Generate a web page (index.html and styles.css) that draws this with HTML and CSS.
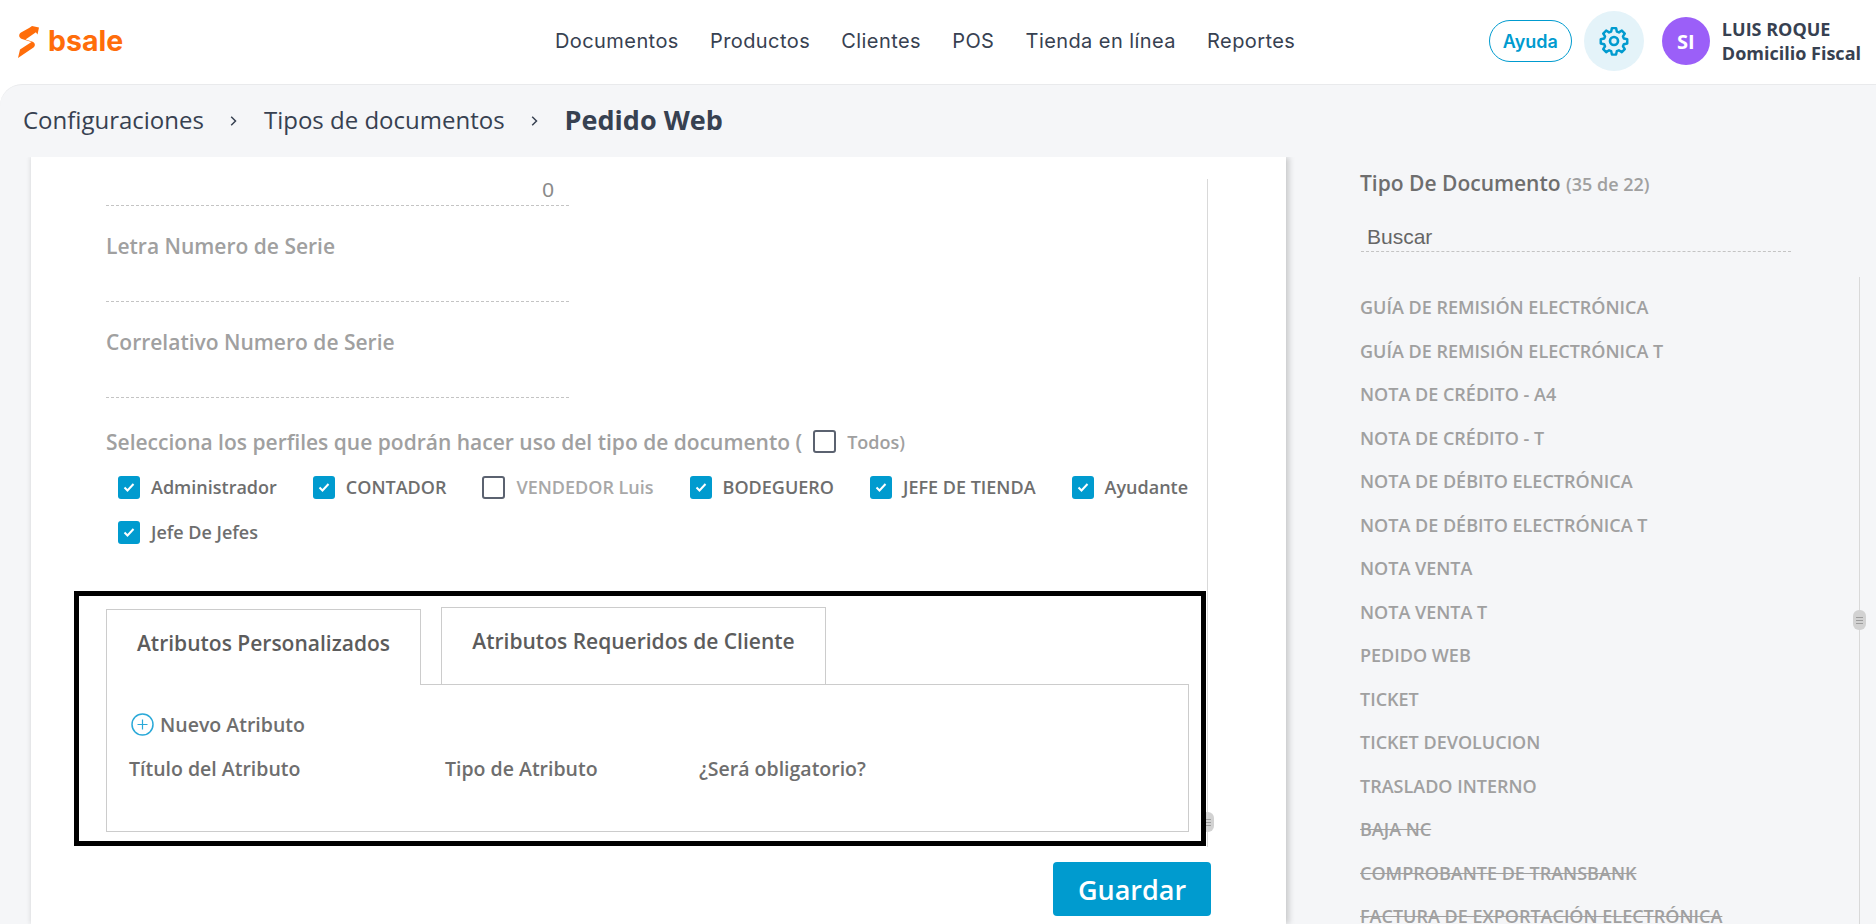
FILE: index.html
```html
<!DOCTYPE html>
<html lang="es">
<head>
<meta charset="utf-8">
<title>Pedido Web</title>
<link rel="stylesheet" href="styles.css">
</head>
<body>
<header class="topbar">
  <a class="logo">
    <svg class="logo-mark" viewBox="0 0 22 32" width="22" height="32"><path fill="#ff6d0a" d="M14 0l7 1.500-1.500 7-1.600-2.200L7.500 13.500 14 15.500c3 1 4 4 1.500 6L0 32l2-8.500 11.500-7.500-9.500-3C1 12 0 8.500 3 6.500L11.500 1.800z"/></svg>
    <span class="logo-text">bsale</span>
  </a>
  <nav class="nav">
    <a>Documentos</a><a>Productos</a><a>Clientes</a><a>POS</a><a>Tienda en línea</a><a>Reportes</a>
  </nav>
  <div class="top-actions">
    <a class="help">Ayuda</a>
    <span class="gear">
      <svg viewBox="0 0 24 24" width="32" height="32" fill="none" stroke="#009bcf" stroke-width="2" stroke-linejoin="round"><path d="M10.300 2.500h3.400l.6 2.800 1.700.7 2.400-1.500 2.400 2.400-1.500 2.400.7 1.700 2.800.6v3.400l-2.800.6-.7 1.700 1.500 2.400-2.400 2.400-2.400-1.500-1.700.7-.6 2.800h-3.400l-.6-2.800-1.700-.7-2.400 1.500-2.400-2.400 1.500-2.400-.7-1.700-2.800-.6v-3.400l2.800-.6.7-1.700-1.500-2.400 2.400-2.400 2.400 1.500 1.700-.7z" transform="translate(12 12) scale(.92) translate(-12 -13)"/><circle cx="12" cy="12" r="3"/></svg>
    </span>
    <span class="avatar">SI</span>
    <div class="user">
      <strong>LUIS ROQUE</strong>
      <strong>Domicilio Fiscal</strong>
    </div>
  </div>
</header>

<main class="page">
  <div class="crumbs">
    <a>Configuraciones</a>
    <svg class="sep" viewBox="0 0 7 10" width="7" height="10"><path d="M1.200 .8L5.500 5 1.200 9.200" fill="none" stroke="#374151" stroke-width="1.500"/></svg>
    <a>Tipos de documentos</a>
    <svg class="sep" viewBox="0 0 7 10" width="7" height="10"><path d="M1.200 .8L5.500 5 1.200 9.200" fill="none" stroke="#374151" stroke-width="1.500"/></svg>
    <b>Pedido Web</b>
  </div>

  <div class="columns">
    <section class="card">
      <div class="card-scroll">
        <div class="scroll-track"><span class="thumb"><i></i><i></i><i></i></span></div>
        <div class="field field-first"><div class="value">0</div></div>
        <div class="field">
          <label class="label">Letra Numero de Serie</label>
          <div class="value"></div>
        </div>
        <div class="field">
          <label class="label">Correlativo Numero de Serie</label>
          <div class="value"></div>
        </div>

        <div class="profiles-title">
          <span>Selecciona los perfiles que podrán hacer uso del tipo de documento (</span>
          <span class="box"></span>
          <span class="todos">Todos)</span>
        </div>
        <div class="profiles">
          <div class="check"><span class="box on"><svg viewBox="0 0 22 22" width="22" height="22"><path d="M6.500 11.500l3 3 6-6.500" fill="none" stroke="#fff" stroke-width="2"/></svg></span>Administrador</div>
          <div class="check"><span class="box on"><svg viewBox="0 0 22 22" width="22" height="22"><path d="M6.500 11.500l3 3 6-6.500" fill="none" stroke="#fff" stroke-width="2"/></svg></span>CONTADOR</div>
          <div class="check off"><span class="box"></span>VENDEDOR Luis</div>
          <div class="check"><span class="box on"><svg viewBox="0 0 22 22" width="22" height="22"><path d="M6.500 11.500l3 3 6-6.500" fill="none" stroke="#fff" stroke-width="2"/></svg></span>BODEGUERO</div>
          <div class="check"><span class="box on"><svg viewBox="0 0 22 22" width="22" height="22"><path d="M6.500 11.500l3 3 6-6.500" fill="none" stroke="#fff" stroke-width="2"/></svg></span>JEFE DE TIENDA</div>
          <div class="check"><span class="box on"><svg viewBox="0 0 22 22" width="22" height="22"><path d="M6.500 11.500l3 3 6-6.500" fill="none" stroke="#fff" stroke-width="2"/></svg></span>Ayudante</div>
          <div class="check"><span class="box on"><svg viewBox="0 0 22 22" width="22" height="22"><path d="M6.500 11.500l3 3 6-6.500" fill="none" stroke="#fff" stroke-width="2"/></svg></span>Jefe De Jefes</div>
        </div>

        <div class="highlight">
          <div class="tabs">
            <div class="tab active">Atributos Personalizados</div>
            <div class="tab">Atributos Requeridos de Cliente</div>
          </div>
          <div class="panel">
            <div class="new-attr">
              <svg viewBox="0 0 23 23" width="23" height="23" fill="none" stroke="#2ba9d8" stroke-width="1.500"><circle cx="11.500" cy="11.500" r="10.500"/><path d="M11.500 6.500v10M6.500 11.500h10" stroke-width="1.200"/></svg>
              <span>Nuevo Atributo</span>
            </div>
            <div class="attr-head">
              <span class="c1">Título del Atributo</span>
              <span class="c2">Tipo de Atributo</span>
              <span>¿Será obligatorio?</span>
            </div>
          </div>
        </div>
      </div>
      <div class="actions"><button class="save">Guardar</button></div>
    </section>

    <aside class="side">
      <h2 class="side-title">Tipo De Documento <small>(35 de 22)</small></h2>
      <div class="search">Buscar</div>
      <div class="side-list">
        <div class="scroll-track side-track"><span class="thumb"><i></i><i></i><i></i></span></div>
        <a>GUÍA DE REMISIÓN ELECTRÓNICA</a>
        <a>GUÍA DE REMISIÓN ELECTRÓNICA T</a>
        <a>NOTA DE CRÉDITO - A4</a>
        <a>NOTA DE CRÉDITO - T</a>
        <a>NOTA DE DÉBITO ELECTRÓNICA</a>
        <a>NOTA DE DÉBITO ELECTRÓNICA T</a>
        <a>NOTA VENTA</a>
        <a>NOTA VENTA T</a>
        <a>PEDIDO WEB</a>
        <a>TICKET</a>
        <a>TICKET DEVOLUCION</a>
        <a>TRASLADO INTERNO</a>
        <a class="gone">BAJA NC</a>
        <a class="gone">COMPROBANTE DE TRANSBANK</a>
        <a class="gone">FACTURA DE EXPORTACIÓN ELECTRÓNICA</a>
      </div>
    </aside>
  </div>
</main>
</body>
</html>
```
FILE: styles.css
```css
* { box-sizing: border-box; }
html, body { margin: 0; height: 924px; overflow: hidden; background: #fff; }
body { font-family: "Open Sans", sans-serif; color: #666; }

.topbar { height: 84px; display: flex; align-items: center; position: relative; }
.logo { display: flex; align-items: center; margin-left: 18px; gap: 8px; }
.logo-mark { display: block; }
.logo-text { font-family: "Inter", sans-serif; font-weight: 700; font-size: 28.500px; color: #ff6d0a; line-height: 32px; position: relative; top: -1px; }
.nav { position: absolute; left: 555px; top: 0; height: 84px; display: flex; align-items: center; gap: 31.200px; font-family: "Inter", sans-serif; font-size: 20px; color: #374151; padding-bottom: 2px; letter-spacing: .42px; }
.top-actions { margin-left: auto; display: flex; align-items: center; padding-right: 15px; }
.help { width: 83px; height: 42px; border: 1.500px solid #009bcf; border-radius: 21px; color: #009bcf; font-family: "Inter", sans-serif; font-weight: 600; font-size: 18px; display: flex; align-items: center; justify-content: center; margin-right: 12px; margin-bottom: 2px; }
.gear { width: 60px; height: 60px; border-radius: 50%; background: #e4f3f9; display: flex; align-items: center; justify-content: center; margin-right: 18px; margin-bottom: 2px; }
.avatar { width: 48px; height: 48px; border-radius: 50%; background: #9b5ff8; color: #fff; font-weight: 700; font-size: 20px; display: flex; align-items: center; justify-content: center; margin-right: 12px; margin-bottom: 2px; }
.user { display: flex; flex-direction: column; font-size: 18px; line-height: 24px; color: #374151; margin-bottom: 2px; }
.user strong { font-weight: 700; white-space: nowrap; }

.page { height: 840px; background: #f5f6f8; border-top: 1px solid #e9eaec; border-top-left-radius: 22px; overflow: hidden; }
.crumbs { height: 72px; padding: 0 0 3px 23px; display: flex; align-items: center; font-size: 24px; color: #374151; }
.crumbs .sep { margin: 2px 26.500px 0; flex: none; }
.crumbs b { font-weight: 700; font-size: 27px; }

.columns { display: flex; align-items: flex-start; }
.card { margin-left: 31px; width: 1255px; height: 767px; background: #fff; box-shadow: 3px 0 6px rgba(0,0,0,.18), -2px 0 4px rgba(0,0,0,.05); clip-path: inset(0 -12px 0 -12px); flex: none; }
.card-scroll { position: relative; padding: 21px 0 0 75px; height: 690px; }
.scroll-track { position: absolute; left: 1176px; top: 22px; bottom: 0; width: 1px; background: #d9d9d9; }
.thumb { position: absolute; left: -6px; top: 633px; width: 13px; height: 20px; border-radius: 6px; background: #d2d2d2; display: flex; flex-direction: column; align-items: center; justify-content: center; gap: 2px; }
.thumb i { display: block; width: 7px; height: 1px; background: #9d9d9d; }

.field { width: 463px; display: flex; flex-direction: column; justify-content: flex-end; }
.field-first { height: 28px; }
.field + .field { height: 96px; }
.label { font-size: 21px; font-weight: 600; color: #a0a0a0; line-height: 27px; margin-bottom: 41px; }
.value { height: 28px; border-bottom: 1px dashed #c4c4c4; text-align: right; font-size: 21px; line-height: 24px; color: #8a8a8a; padding-right: 15px; font-family: "Liberation Sans", sans-serif; }
.field .label + .value { height: 0; }

.profiles-title { display: flex; align-items: center; margin-top: 30px; height: 27px; font-size: 21px; font-weight: 600; color: #a0a0a0; white-space: nowrap; }
.todos { font-size: 18px; margin-left: 11px; }
.box { width: 23px; height: 23px; border: 2px solid #5b6270; border-radius: 3px; background: #fff; flex: none; margin-left: 11px; display: block; }
.box.on { border: 0; background: #009bcf; width: 22px; }
.profiles { display: flex; flex-wrap: wrap; column-gap: 36px; row-gap: 21px; margin: 20px 0 0 12px; width: 1090px; }
.check { display: flex; align-items: center; gap: 11px; font-size: 18px; font-weight: 600; color: #6e6e6e; height: 24px; white-space: nowrap; }
.check .box { margin-left: 0; }
.check.off { color: #a8a8a8; }

.highlight { position: absolute; left: 43px; top: 434px; width: 1132px; height: 255px; border: 5px solid #000; padding: 11px 12px 9px 27px; }
.tabs { display: flex; align-items: flex-end; gap: 20px; height: 77px; }
.tab { width: 385px; height: 77px; border: 1px solid #ccc; border-bottom: 0; background: #fff; font-size: 21px; font-weight: 600; color: #5c5c5c; display: flex; align-items: center; justify-content: center; padding-bottom: 10px; }
.tab.active { width: 315px; height: 76px; position: relative; z-index: 1; margin-bottom: -1px; }
.panel { border: 1px solid #ccc; height: 148px; padding: 26px 0 0 22px; font-size: 19.500px; font-weight: 600; color: #6e6e6e; }
.new-attr { display: flex; align-items: center; gap: 6px; margin-left: 2px; height: 26px; }
.attr-head { display: flex; margin-top: 19px; line-height: 26px; }
.attr-head .c1 { width: 316px; }
.attr-head .c2 { width: 254px; }

.actions { display: flex; justify-content: flex-end; padding: 15px 75px 0 0; }
.save { width: 158px; height: 54px; border: 0; border-radius: 4px; background: #009bcf; color: #fff; font-family: "Open Sans", sans-serif; font-size: 27px; font-weight: 600; }

.side { flex: none; width: 590px; padding: 0 0 0 74px; position: relative; }
.side-title { margin: 11px 0 0; font-size: 21px; font-weight: 600; color: #6e6e6e; line-height: 30px; }
.side-title small { font-size: 18px; font-weight: 600; color: #a0a0a0; }
.search { margin-top: 17px; width: 430px; margin-left: 1px; height: 36px; border-bottom: 1px dashed #c4c4c4; padding-left: 6px; font-family: "Liberation Sans", sans-serif; font-size: 21px; line-height: 41px; color: #666; }
.side-list { display: flex; flex-direction: column; margin-top: 34px; font-size: 18px; font-weight: 600; color: #a0a0a0; }
.side-list a { height: 43.500px; line-height: 43.500px; white-space: nowrap; }
.side-list .gone { text-decoration: line-through; }
.side-track { left: 573px; top: 120px; bottom: -400px; }
.side-track .thumb { top: 333px; }
```
